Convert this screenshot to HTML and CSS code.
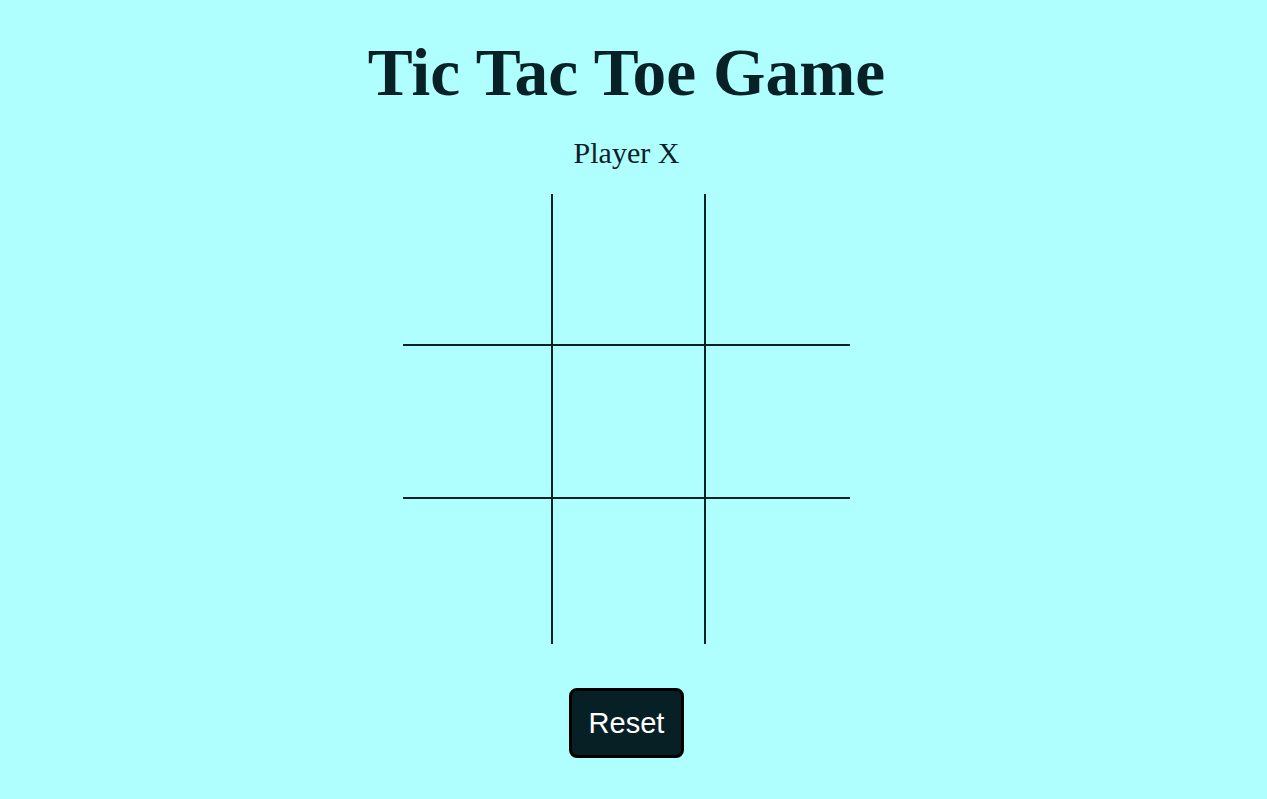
FILE: index.html
```html
<!DOCTYPE html>
<html lang="en">
<head>
<meta charset="UTF-8">
<title>Tic Tac Toe Game</title>
<link rel="stylesheet" href="styles.css">
</head>
<body>
<main class="game">
  <h1 class="title">Tic Tac Toe Game</h1>
  <p class="turn">Player X</p>
  <div class="board">
    <button class="cell"></button>
    <button class="cell"></button>
    <button class="cell"></button>
    <button class="cell"></button>
    <button class="cell"></button>
    <button class="cell"></button>
    <button class="cell"></button>
    <button class="cell"></button>
    <button class="cell"></button>
  </div>
  <button class="reset">Reset</button>
</main>
</body>
</html>
```

FILE: styles.css
```css
html, body {
  margin: 0;
  padding: 0;
  background: #afffff;
}
body {
  min-height: 799px;
  padding-right: 14px;
  font-family: "Liberation Serif", "Times New Roman", serif;
  color: #082127;
}
.game {
  display: flex;
  flex-direction: column;
  align-items: center;
}
.title {
  margin: 35px 0 0;
  font-size: 67.4px;
  line-height: 75px;
  font-weight: bold;
}
.turn {
  margin: 25px 0 0;
  font-size: 30px;
  line-height: 35px;
}
.board {
  margin-top: 24px;
  display: grid;
  grid-template-columns: 148px 151px 144px;
  grid-template-rows: 150px 151px 145px;
  gap: 2px;
  background: #082127;
}
.cell {
  background: #afffff;
  border: none;
  padding: 0;
  margin: 0;
}
.reset {
  margin-top: 44px;
  padding: 16px 17px;
  font-family: "Liberation Sans", Arial, sans-serif;
  font-size: 29px;
  line-height: 32px;
  color: #ffffff;
  background: #072026;
  border: 3px solid #000000;
  border-radius: 8px;
}
```
